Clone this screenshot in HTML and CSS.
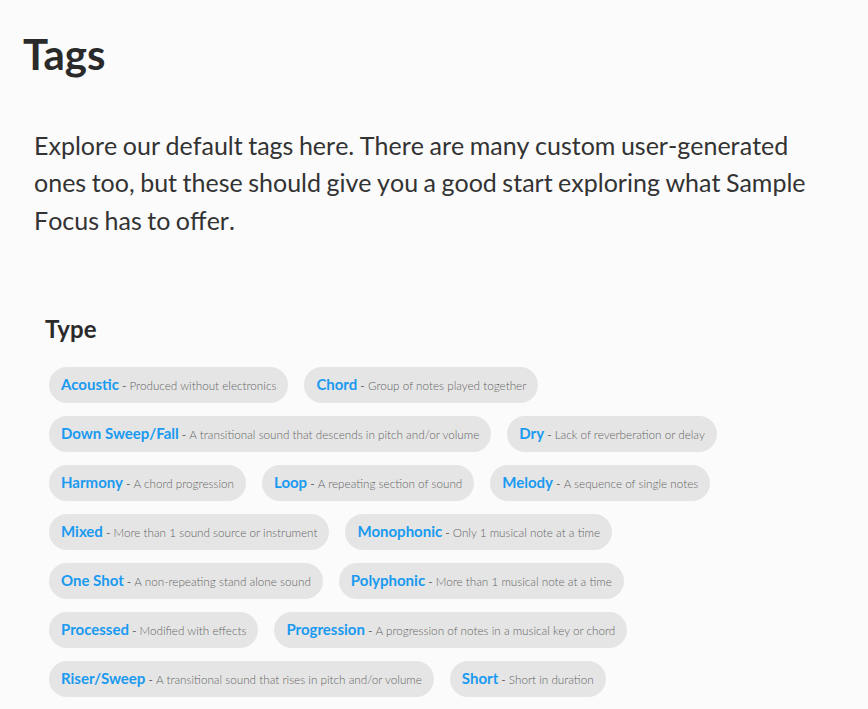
FILE: index.html
```html
<!DOCTYPE html>
<html lang="en">
<head>
<meta charset="utf-8">
<title>Tags</title>
<link rel="stylesheet" href="styles.css">
</head>
<body>
<h1 class="title">Tags</h1>
<p class="intro">Explore our default tags here. There are many custom user-generated ones too, but these should give you a good start exploring what Sample Focus has to offer.</p>
<section class="group">
<h2 class="group-title">Type</h2>
<ul class="tags">
<li class="tag"><a class="tag-name">Acoustic</a><span class="sep"> - </span><span class="desc">Produced without electronics</span></li>
<li class="tag"><a class="tag-name">Chord</a><span class="sep"> - </span><span class="desc">Group of notes played together</span></li>
<li class="tag"><a class="tag-name">Down Sweep/Fall</a><span class="sep"> - </span><span class="desc">A transitional sound that descends in pitch and/or volume</span></li>
<li class="tag"><a class="tag-name">Dry</a><span class="sep"> - </span><span class="desc">Lack of reverberation or delay</span></li>
<li class="tag"><a class="tag-name">Harmony</a><span class="sep"> - </span><span class="desc">A chord progression</span></li>
<li class="tag"><a class="tag-name">Loop</a><span class="sep"> - </span><span class="desc">A repeating section of sound</span></li>
<li class="tag"><a class="tag-name">Melody</a><span class="sep"> - </span><span class="desc">A sequence of single notes</span></li>
<li class="tag"><a class="tag-name">Mixed</a><span class="sep"> - </span><span class="desc">More than 1 sound source or instrument</span></li>
<li class="tag"><a class="tag-name">Monophonic</a><span class="sep"> - </span><span class="desc">Only 1 musical note at a time</span></li>
<li class="tag"><a class="tag-name">One Shot</a><span class="sep"> - </span><span class="desc">A non-repeating stand alone sound</span></li>
<li class="tag"><a class="tag-name">Polyphonic</a><span class="sep"> - </span><span class="desc">More than 1 musical note at a time</span></li>
<li class="tag"><a class="tag-name">Processed</a><span class="sep"> - </span><span class="desc">Modified with effects</span></li>
<li class="tag"><a class="tag-name">Progression</a><span class="sep"> - </span><span class="desc">A progression of notes in a musical key or chord</span></li>
<li class="tag"><a class="tag-name">Riser/Sweep</a><span class="sep"> - </span><span class="desc">A transitional sound that rises in pitch and/or volume</span></li>
<li class="tag"><a class="tag-name">Short</a><span class="sep"> - </span><span class="desc">Short in duration</span></li>
</ul>
</section>
</body>
</html>
```
FILE: styles.css
```css
html, body { margin: 0; padding: 0; height: 709px; overflow: hidden; }
body { background: #fbfbfb; color: #2a2a2a; font-family: Lato, sans-serif; padding: 0 23px; box-sizing: border-box; }
.title { font-size: 42px; font-weight: 700; line-height: 50px; margin: 0; padding-top: 29px; }
.intro { font-size: 25px; line-height: 37.4px; margin: 0; padding: 48px 30px 0 11px; font-kerning: none; word-spacing: -0.9px; color: #333; }
.group { padding: 0 0 0 22px; margin-top: 76px; }
.group-title { font-size: 24px; font-weight: 700; line-height: 28px; margin: 0 0 24px; }
.tags { list-style: none; margin: 0; padding: 0 0 0 4px; display: flex; flex-wrap: wrap; gap: 13px 16px; }
.tag { background: #e5e5e5; border-radius: 18px; height: 36px; line-height: 35px; padding: 0 12px; box-sizing: border-box; white-space: nowrap; color: #666; font-size: 12px; font-weight: 300; }
.tag-name { color: #1a9af0; font-size: 15px; font-weight: 700; }
.sep { font-size: 12px; font-weight: 400; }
.desc { font-size: 11.7px; }
```
